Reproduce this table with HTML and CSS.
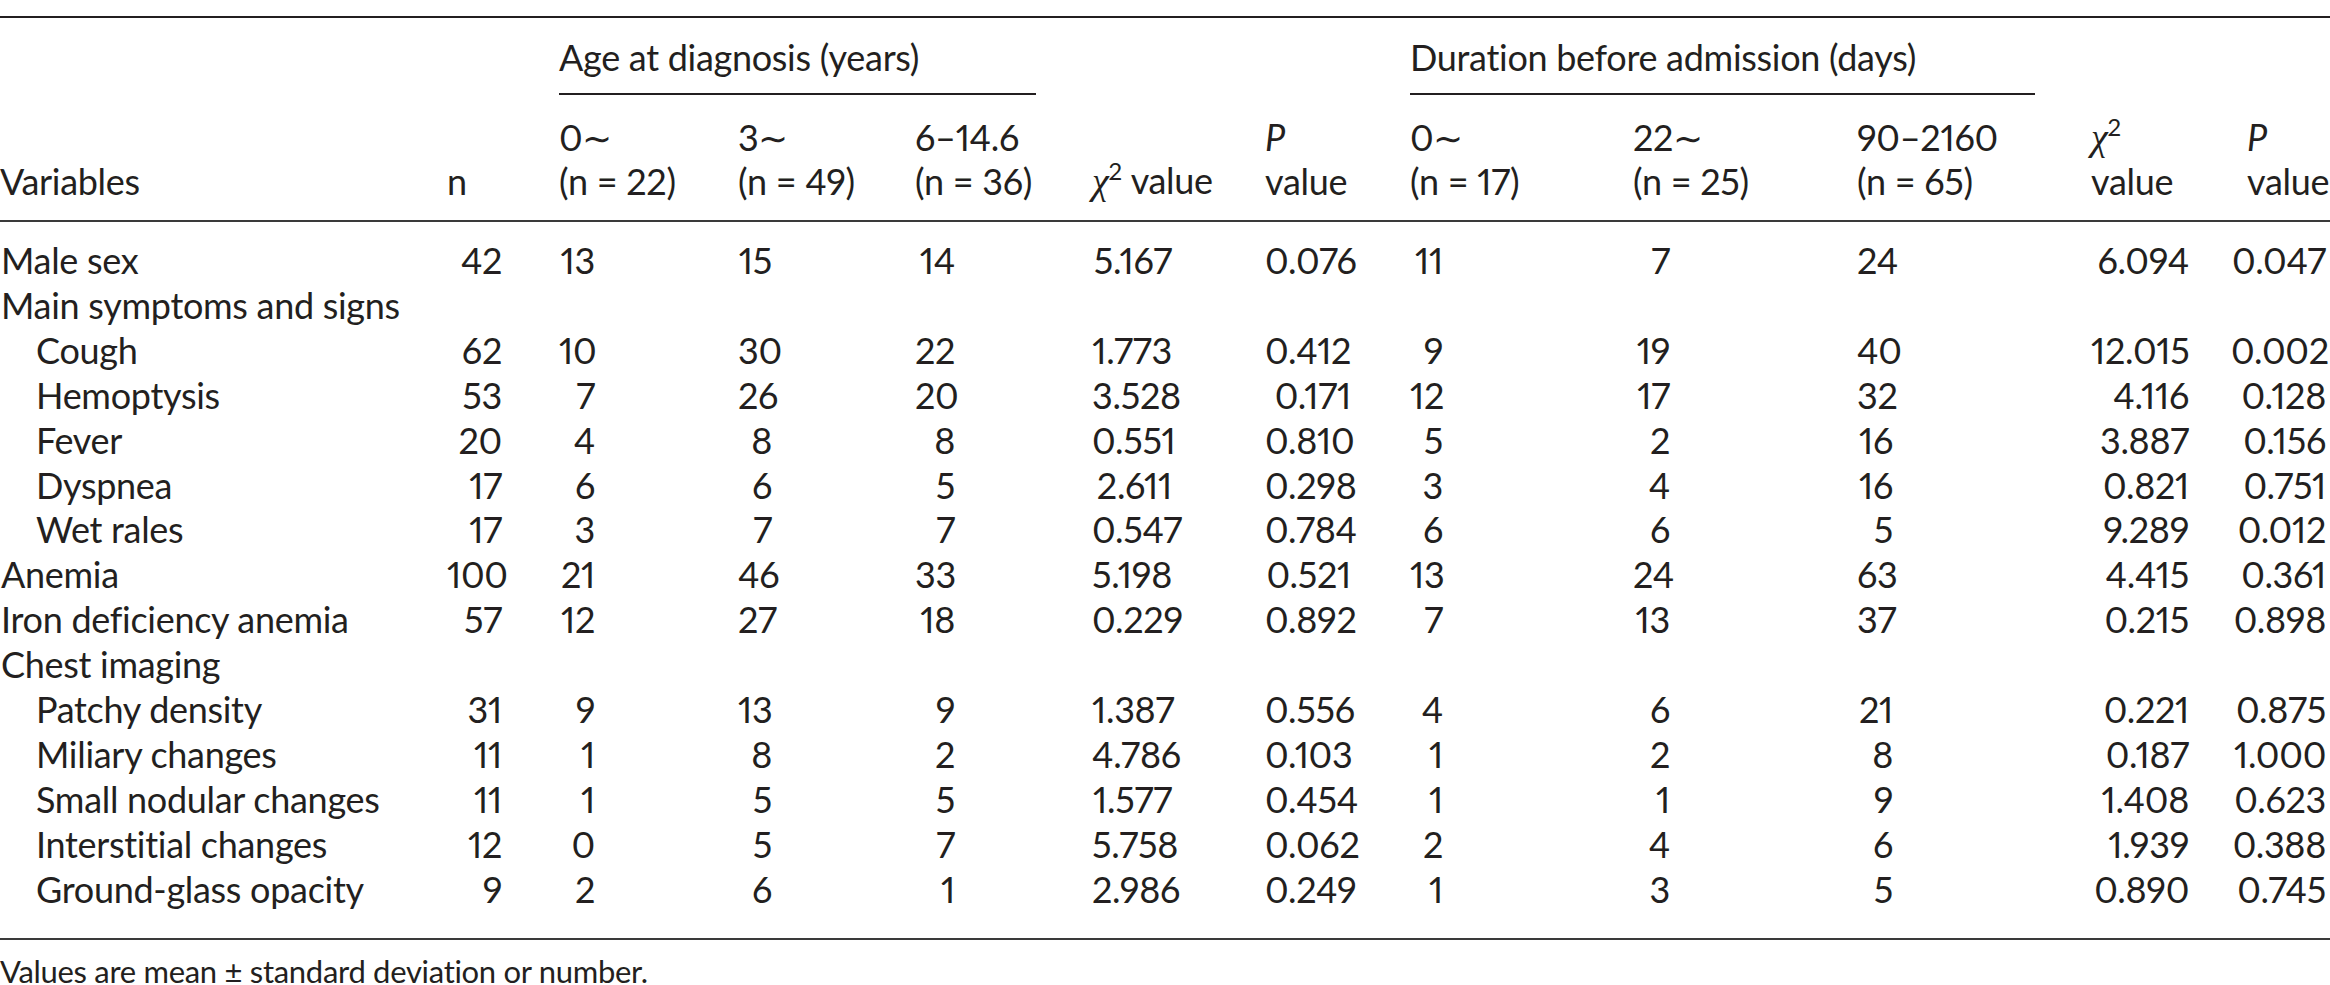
FILE: index.html
```html
<!DOCTYPE html>
<html lang="en">
<head>
<meta charset="utf-8">
<title>Table</title>
<link rel="stylesheet" href="styles.css">
</head>
<body>
<div class="page">
<table class="tbl">
<colgroup>
<col class="c-var"><col class="c-n"><col class="c-a1"><col class="c-a2"><col class="c-a3"><col class="c-x1"><col class="c-p1"><col class="c-d1"><col class="c-d2"><col class="c-d3"><col class="c-x2"><col class="c-p2">
</colgroup>
<thead>
<tr class="spanrow">
<th></th><th></th>
<th colspan="3"><div class="spanner">Age at diagnosis (years)</div></th>
<th></th><th></th>
<th colspan="3"><div class="spanner">Duration before admission (days)</div></th>
<th></th><th></th>
</tr>
<tr class="subrow">
<th>Variables</th>
<th>n</th>
<th>0∼<br>(n = 22)</th>
<th>3∼<br>(n = 49)</th>
<th>6–14.6<br>(n = 36)</th>
<th><span class="chi">χ</span><sup>2</sup> value</th>
<th><i>P</i><br>value</th>
<th>0∼<br>(n = 17)</th>
<th>22∼<br>(n = 25)</th>
<th>90–2160<br>(n = 65)</th>
<th><span class="chi">χ</span><sup>2</sup><br>value</th>
<th class="pcol"><i>P</i><br>value</th>
</tr>
</thead>
<tbody>
<tr class="first"><td>Male sex</td><td>42</td><td>13</td><td>15</td><td>14</td><td>5.167</td><td>0.076</td><td>11</td><td>7</td><td>24</td><td>6.094</td><td>0.047</td></tr>
<tr><td colspan="12">Main symptoms and signs</td></tr>
<tr class="ind"><td>Cough</td><td>62</td><td>10</td><td>30</td><td>22</td><td>1.773</td><td>0.412</td><td>9</td><td>19</td><td>40</td><td>12.015</td><td>0.002</td></tr>
<tr class="ind"><td>Hemoptysis</td><td>53</td><td>7</td><td>26</td><td>20</td><td>3.528</td><td>0.171</td><td>12</td><td>17</td><td>32</td><td>4.116</td><td>0.128</td></tr>
<tr class="ind"><td>Fever</td><td>20</td><td>4</td><td>8</td><td>8</td><td>0.551</td><td>0.810</td><td>5</td><td>2</td><td>16</td><td>3.887</td><td>0.156</td></tr>
<tr class="ind"><td>Dyspnea</td><td>17</td><td>6</td><td>6</td><td>5</td><td>2.611</td><td>0.298</td><td>3</td><td>4</td><td>16</td><td>0.821</td><td>0.751</td></tr>
<tr class="ind"><td>Wet rales</td><td>17</td><td>3</td><td>7</td><td>7</td><td>0.547</td><td>0.784</td><td>6</td><td>6</td><td>5</td><td>9.289</td><td>0.012</td></tr>
<tr><td>Anemia</td><td>100</td><td>21</td><td>46</td><td>33</td><td>5.198</td><td>0.521</td><td>13</td><td>24</td><td>63</td><td>4.415</td><td>0.361</td></tr>
<tr><td>Iron deficiency anemia</td><td>57</td><td>12</td><td>27</td><td>18</td><td>0.229</td><td>0.892</td><td>7</td><td>13</td><td>37</td><td>0.215</td><td>0.898</td></tr>
<tr><td colspan="12">Chest imaging</td></tr>
<tr class="ind"><td>Patchy density</td><td>31</td><td>9</td><td>13</td><td>9</td><td>1.387</td><td>0.556</td><td>4</td><td>6</td><td>21</td><td>0.221</td><td>0.875</td></tr>
<tr class="ind"><td>Miliary changes</td><td>11</td><td>1</td><td>8</td><td>2</td><td>4.786</td><td>0.103</td><td>1</td><td>2</td><td>8</td><td>0.187</td><td>1.000</td></tr>
<tr class="ind"><td>Small nodular changes</td><td>11</td><td>1</td><td>5</td><td>5</td><td>1.577</td><td>0.454</td><td>1</td><td>1</td><td>9</td><td>1.408</td><td>0.623</td></tr>
<tr class="ind"><td>Interstitial changes</td><td>12</td><td>0</td><td>5</td><td>7</td><td>5.758</td><td>0.062</td><td>2</td><td>4</td><td>6</td><td>1.939</td><td>0.388</td></tr>
<tr class="ind last"><td>Ground-glass opacity</td><td>9</td><td>2</td><td>6</td><td>1</td><td>2.986</td><td>0.249</td><td>1</td><td>3</td><td>5</td><td>0.890</td><td>0.745</td></tr>
</tbody>
</table>
<p class="note">Values are mean ± standard deviation or number.</p>
</div>
</body>
</html>
```

FILE: styles.css
```css
html, body {
  margin: 0;
  padding: 0;
  background: #ffffff;
}
body {
  width: 2330px;
  height: 985px;
  overflow: hidden;
  color: #231f20;
  font-family: "Lato", "Open Sans", sans-serif;
  font-size: 36px;
  line-height: 44px;
  letter-spacing: -0.3px;
  font-variant-numeric: proportional-nums;
}
.page {
  padding-top: 16px;
}
.tbl {
  width: 2330px;
  table-layout: fixed;
  border-collapse: separate;
  border-spacing: 0;
  border-top: 2px solid #231f20;
  border-bottom: 2px solid #3a3a3a;
}
.c-var { width: 447px; }
.c-n { width: 112px; }
.c-a1 { width: 179px; }
.c-a2 { width: 177px; }
.c-a3 { width: 177px; }
.c-x1 { width: 173px; }
.c-p1 { width: 145px; }
.c-d1 { width: 223px; }
.c-d2 { width: 224px; }
.c-d3 { width: 234px; }
.c-x2 { width: 140px; }
.c-p2 { width: 99px; }

.tbl th, .tbl td {
  padding: 0;
  font-weight: normal;
  text-align: left;
  white-space: nowrap;
}
.spanrow th {
  padding-top: 17px;
  vertical-align: bottom;
}
.spanner {
  padding-bottom: 14px;
  border-bottom: 2px solid #231f20;
  margin-right: 56px;
}
.subrow th {
  padding-top: 19px;
  padding-bottom: 17px;
  vertical-align: bottom;
  border-bottom: 2px solid #3a3a3a;
}
.subrow th.pcol {
  padding-left: 16px;
}
.chi {
  font-family: "Liberation Serif", serif;
  font-style: italic;
  font-size: 38px;
}
sup {
  font-size: 24px;
  line-height: 0;
  vertical-align: 14px;
}
.tbl i {
  font-style: italic;
}
.tbl td {
  line-height: 44.9px;
  text-align: right;
}
.tbl td:first-child {
  text-align: left;
  padding-left: 1px;
}
.tbl .ind td:first-child {
  padding-left: 36px;
}
.tbl .first td {
  padding-top: 16px;
}
.tbl .last td {
  padding-bottom: 26px;
}
.tbl td:nth-child(2) { padding-right: 57px; }
.tbl td:nth-child(3) { padding-right: 143px; }
.tbl td:nth-child(4) { padding-right: 143px; }
.tbl td:nth-child(5) { padding-right: 137px; }
.tbl td:nth-child(6) { padding-right: 93px; }
.tbl td:nth-child(7) { padding-right: 59px; }
.tbl td:nth-child(8) { padding-right: 190px; }
.tbl td:nth-child(9) { padding-right: 187px; }
.tbl td:nth-child(10) { padding-right: 198px; }
.tbl td:nth-child(11) { padding-right: 42px; }
.tbl td:nth-child(12) { padding-right: 4px; }

.note {
  margin: 13px 0 0 0;
  font-size: 31px;
  line-height: 36px;
}
```
